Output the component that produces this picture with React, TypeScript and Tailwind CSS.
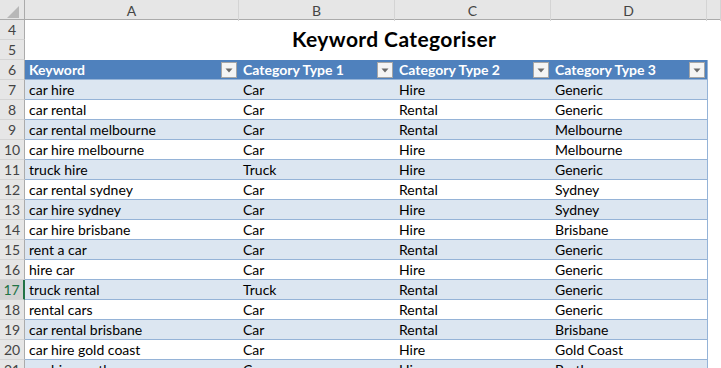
import React from "react";

const rows: [string, string, string, string][] = [
  ["car hire", "Car", "Hire", "Generic"],
  ["car rental", "Car", "Rental", "Generic"],
  ["car rental melbourne", "Car", "Rental", "Melbourne"],
  ["car hire melbourne", "Car", "Hire", "Melbourne"],
  ["truck hire", "Truck", "Hire", "Generic"],
  ["car rental sydney", "Car", "Rental", "Sydney"],
  ["car hire sydney", "Car", "Hire", "Sydney"],
  ["car hire brisbane", "Car", "Hire", "Brisbane"],
  ["rent a car", "Car", "Rental", "Generic"],
  ["hire car", "Car", "Hire", "Generic"],
  ["truck rental", "Truck", "Rental", "Generic"],
  ["rental cars", "Car", "Rental", "Generic"],
  ["car rental brisbane", "Car", "Rental", "Brisbane"],
  ["car hire gold coast", "Car", "Hire", "Gold Coast"],
  ["car hire perth", "Car", "Hire", "Perth"],
];

const cols = "grid-cols-[25px_214px_156px_156px_156px_14px]";

function FilterBtn() {
  return (
    <div className="absolute right-[2px] top-[2px] w-[16px] h-[16px] bg-[#f4f4f4] border border-[#a6a6a6] flex items-center justify-center">
      <svg width="8" height="5" viewBox="0 0 8 5">
        <path d="M0.5 0.5 L7.5 0.5 L4 4.5 Z" fill="#6a6a6a" />
      </svg>
    </div>
  );
}

function RowHead({ n, active }: { n: number; active?: boolean }) {
  return (
    <div
      className={
        "h-[20px] flex items-center justify-center border-b border-[#d4d4d4] " +
        (active
          ? "bg-[#d2d2d2] text-[#217346] border-r-2 border-r-[#217346]"
          : "bg-[#e6e6e6] text-[#444] border-r border-r-[#ababab]")
      }
    >
      {n}
    </div>
  );
}

export default function App() {
  return (
    <div
      className="w-[721px] h-[368px] overflow-hidden bg-white text-[14px] text-black"
      style={{ fontFamily: "Lato, 'Liberation Sans', sans-serif" }}
    >
      {/* column header */}
      <div className={"grid " + cols + " h-[20px] bg-[#e6e6e6] border-b border-[#ababab] text-[#444]"}>
        <div className="relative border-r border-[#ababab]">
          <svg className="absolute right-[5px] bottom-[3px]" width="12" height="12" viewBox="0 0 12 12">
            <path d="M12 0 L12 12 L0 12 Z" fill="#b8b8b8" />
          </svg>
        </div>
        {["A", "B", "C", "D", ""].map((c, i) => (
          <div key={i} className="flex items-center justify-center border-r border-[#d4d4d4]">
            {c}
          </div>
        ))}
      </div>

      {/* rows 4-5 with title */}
      <div className={"grid " + cols}>
        <div className="flex flex-col">
          <RowHead n={4} />
          <RowHead n={5} />
        </div>
        <div className="col-span-4 relative h-[40px]">
          <div className="absolute left-[267px] top-[8px] leading-none text-[21px] tracking-[0.4px] font-bold text-black whitespace-nowrap">
            Keyword Categoriser
          </div>
        </div>
        <div />
      </div>

      {/* header row 6 */}
      <div className={"grid " + cols}>
        <RowHead n={6} />
        {["Keyword", "Category Type 1", "Category Type 2", "Category Type 3"].map((h) => (
          <div key={h} className="relative h-[20px] bg-[#4f81bd] text-white font-bold flex items-center pl-[4px] border-b border-[#95b3d7]">
            {h}
            <FilterBtn />
          </div>
        ))}
        <div className="border-l border-[#95b3d7]" />
      </div>

      {rows.map((r, i) => {
        const n = 7 + i;
        const band = i % 2 === 0 ? "bg-[#dce6f1]" : "bg-white";
        return (
          <div key={n} className={"grid " + cols}>
            <RowHead n={n} active={n === 17} />
            {r.map((c, j) => (
              <div key={j} className={"h-[20px] flex items-center pl-[4px] border-b border-[#95b3d7] whitespace-nowrap " + band}>
                {c}
              </div>
            ))}
            <div className="border-l border-[#95b3d7]" />
          </div>
        );
      })}
    </div>
  );
}
